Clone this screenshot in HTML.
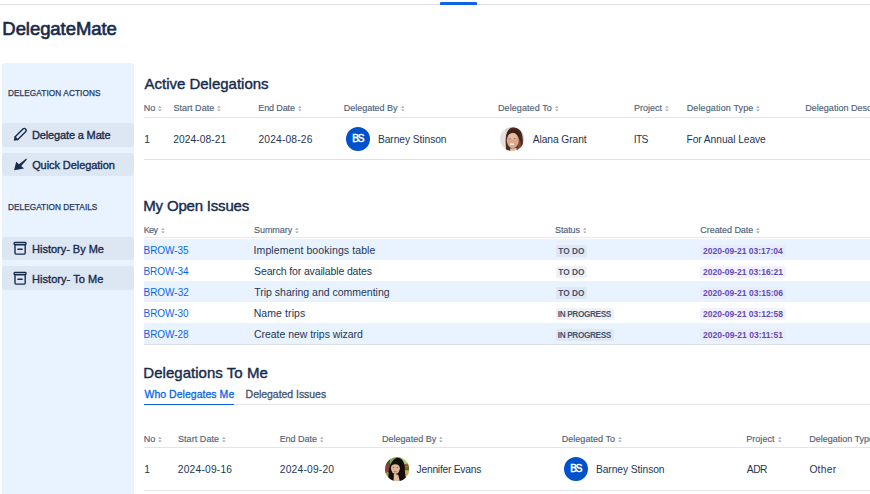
<!DOCTYPE html>
<html><head><meta charset="utf-8">
<style>
*{box-sizing:border-box;margin:0;padding:0}
html,body{width:870px;height:494px;overflow:hidden;background:#fff}
body{font-family:"Liberation Sans",sans-serif;color:#172b4d;position:relative;font-size:11px}
.abs,.t{position:absolute;white-space:nowrap}
.topline{left:0;top:3.8px;width:870px;height:1px;background:#dfe1e6}
.topbar{left:440.2px;top:2px;width:36.4px;height:2.8px;background:#0c66e4;border-radius:1.2px 1.2px 0.5px 0.5px}
.side{left:2px;top:63px;width:132px;height:440px;background:#e9f2ff;border-radius:3px}
.btn{left:2px;width:132px;height:23.5px;background:#dde6f3;border-radius:3px}
.hl{left:144px;width:726px;height:2px;background:#e3e5ea}
.av{width:24px;height:24px;border-radius:50%}
.bs{background:#0052cc;color:#fff;font-size:10px;font-weight:700;text-align:center;line-height:24px}
.row{left:143.7px;width:727px;height:21px;background:#e9f2ff}
.lz{height:12.2px;border-radius:2.5px;left:555.8px}
.dz{height:11.9px;border-radius:2.5px;left:700.3px;width:85.5px}
</style></head><body>
<div class="abs topline"></div><div class="abs topbar"></div>
<div class="abs side"></div>
<div class="abs btn" style="top:123px"></div>
<div class="abs btn" style="top:152.8px"></div>
<div class="abs btn" style="top:236.5px"></div>
<div class="abs btn" style="top:266.3px"></div>
<svg class="abs" style="left:12px;top:127px" width="16" height="16" viewBox="0 0 16 16"><g transform="translate(1.8 13.8) rotate(-45)"><path d="M0 0L3.8 -2.5V2.5Z" fill="#172b4d"/><path d="M3.5 -1.85H14.8a1.85 1.85 0 0 1 0 3.7H3.5Z" fill="none" stroke="#172b4d" stroke-width="1.4" stroke-linejoin="round"/></g></svg>
<svg class="abs" style="left:12px;top:157px" width="16" height="16" viewBox="0 0 16 16"><path d="M2.1 13.3L4.2 4.8L7 7.2L14.2 1.6L14.9 2.4L9.2 9L12 11.4Z" fill="#172b4d"/></svg>
<svg class="abs" style="left:12px;top:240px" width="16" height="16" viewBox="0 0 16 16"><g fill="none" stroke="#172b4d" stroke-width="1.4" stroke-linecap="round" stroke-linejoin="round"><rect x="2.2" y="2.5" width="11.7" height="2.2" rx=".6"/><path d="M3 5.4V13.1a1 1 0 0 0 1 1H12.2a1 1 0 0 0 1 -1V5.4M5.9 9.3h4.3"/></g></svg>
<svg class="abs" style="left:12px;top:270px" width="16" height="16" viewBox="0 0 16 16"><g fill="none" stroke="#172b4d" stroke-width="1.4" stroke-linecap="round" stroke-linejoin="round"><rect x="2.2" y="2.5" width="11.7" height="2.2" rx=".6"/><path d="M3 5.4V13.1a1 1 0 0 0 1 1H12.2a1 1 0 0 0 1 -1V5.4M5.9 9.3h4.3"/></g></svg>

<div class="abs hl" style="top:116.5px;height:1.5px"></div>
<div class="abs av bs" style="left:346.2px;top:126.65px"></div>
<svg class="abs" style="left:500.3px;top:126.7px" width="24" height="24" viewBox="0 0 24 24"><defs><clipPath id="c1"><circle cx="12" cy="12" r="12"/></clipPath><filter id="b1" x="-10%" y="-10%" width="120%" height="120%"><feGaussianBlur stdDeviation="0.7"/></filter></defs><g clip-path="url(#c1)"><g filter="url(#b1)"><rect x="-2" y="-2" width="28" height="28" fill="#d4cfca"/><rect x="-2" y="-2" width="7.5" height="28" fill="#e4e1de"/><path d="M6.5 26C5.5 18 4.8 8 8 3.5C10.5 -.2 16.5 -.8 19.5 2.5C23 6 23.3 14 22.5 20C22 23 21 25 20 26Z" fill="#4b291e"/><path d="M18.5 12C21 14 22 19 20 24L17 25Z" fill="#7d4731"/><ellipse cx="12.8" cy="13.4" rx="6" ry="7.8" fill="#dca88d"/><ellipse cx="12.4" cy="9.6" rx="4" ry="3" fill="#e8bca3"/><path d="M6.3 11C6.8 5 11 2.3 14.8 2.8C18.5 3.3 20 7 19.6 11.5C18.3 8.2 16.2 6 13.2 5.8C10 5.6 7.5 7.8 6.3 11Z" fill="#3a1e16"/><ellipse cx="10" cy="11.8" rx="1.1" ry=".45" fill="#7a5850"/><ellipse cx="14.6" cy="11.5" rx="1.1" ry=".45" fill="#7a5850"/><ellipse cx="11.9" cy="17.2" rx="2.1" ry=".9" fill="#f7eeea"/><path d="M10 21.5L10.5 26H17.5L16.5 21Z" fill="#e6bca6"/></g></g></svg>
<div class="abs hl" style="top:158.8px;height:1.5px;background:#dde0e6"></div>

<div class="abs hl" style="top:237.3px;height:1.2px;background:#e6e9ef"></div>
<div class="abs row" style="top:239px"></div>
<div class="abs row" style="top:281px"></div>
<div class="abs row" style="top:323px"></div>
<div class="abs hl" style="top:343.8px;height:1px;background:#d9dde4"></div>
<div class="abs lz" style="top:244.8px;width:30.9px;background:#dfe7f4"></div><div class="abs dz" style="top:245px;background:#e9ebff"></div>
<div class="abs lz" style="top:265.8px;width:30.9px;background:#f0f1f4"></div><div class="abs dz" style="top:266px;background:#f3f0ff"></div>
<div class="abs lz" style="top:286.8px;width:30.9px;background:#dfe7f4"></div><div class="abs dz" style="top:287px;background:#e9ebff"></div>
<div class="abs lz" style="top:307.8px;width:58.3px;background:#f0f1f4"></div><div class="abs dz" style="top:308px;background:#f3f0ff"></div>
<div class="abs lz" style="top:328.8px;width:58.3px;background:#dfe7f4"></div><div class="abs dz" style="top:329px;background:#e9ebff"></div>

<div class="abs hl" style="top:404.2px;height:1px"></div>
<div class="abs" style="left:144px;top:403.7px;width:90.1px;height:1.4px;background:#0c66e4"></div>
<div class="abs hl" style="top:446.5px;height:1.5px"></div>
<svg class="abs" style="left:384.7px;top:457.2px" width="24.3" height="24.3" viewBox="0 0 24 24"><defs><clipPath id="c2"><circle cx="12" cy="12" r="12"/></clipPath><filter id="b2" x="-10%" y="-10%" width="120%" height="120%"><feGaussianBlur stdDeviation="0.7"/></filter></defs><g clip-path="url(#c2)"><g filter="url(#b2)"><rect x="-2" y="-2" width="28" height="28" fill="#86a24a"/><rect x="-2" y="-2" width="7" height="28" fill="#5f4c3c"/><ellipse cx="1.3" cy="11.5" rx="2" ry="3.2" fill="#b43232"/><ellipse cx="2.8" cy="17.5" rx="2" ry="2.8" fill="#90a545"/><ellipse cx="19" cy="3.5" rx="5" ry="3.5" fill="#bccf80"/><ellipse cx="21" cy="8.3" rx="2.8" ry="1.2" fill="#c23a2a"/><rect x="18" y="10" width="8" height="3" fill="#55702f"/><rect x="18" y="13.5" width="8" height="4.5" fill="#d8a75c"/><rect x="18" y="18" width="8" height="8" fill="#dcc79e"/><path d="M3.6 26C3 16 3.5 4.5 11.5 .8C18 .5 20 7 19.6 13C19.6 17 21.3 21 20.6 26Z" fill="#120e0c"/><ellipse cx="10.3" cy="11" rx="4.4" ry="5.7" fill="#dfb498"/><path d="M5.3 9.2C6.3 4.5 10 3.3 13 4C15.8 4.8 15.8 8 15.2 10.2C13.7 7.6 11.6 6.8 9.6 7.2C8 7.6 6.4 8.3 5.3 9.2Z" fill="#120e0c"/><ellipse cx="8.4" cy="10.5" rx=".9" ry=".35" fill="#5a463c"/><ellipse cx="12.2" cy="10.3" rx=".9" ry=".35" fill="#5a463c"/><ellipse cx="10" cy="14.4" rx="1.4" ry=".55" fill="#c46a6a"/><path d="M8.8 16.5L8.3 26H15.2L13 17.5Z" fill="#e4bca0"/></g></g></svg>
<div class="abs av bs" style="left:564.4px;top:457.3px"></div>
<div class="abs hl" style="top:489.8px;height:1.2px"></div>
<div class="t" style="left:2.35px;top:18.89px;font-size:18.5px;line-height:20px;color:#172b4d;font-weight:400;letter-spacing:-0.062px;-webkit-text-stroke:0.65px #172b4d;">DelegateMate</div>
<div class="t" style="left:7.96px;top:84.14px;font-size:8.25px;line-height:20px;color:#27395a;font-weight:400;letter-spacing:0.088px;-webkit-text-stroke:0.25px #27395a;">DELEGATION ACTIONS</div>
<div class="t" style="left:7.96px;top:197.94px;font-size:8.25px;line-height:20px;color:#27395a;font-weight:400;letter-spacing:0.046px;-webkit-text-stroke:0.25px #27395a;">DELEGATION DETAILS</div>
<div class="t" style="left:32.09px;top:125.29px;font-size:11.0px;line-height:20px;color:#172b4d;font-weight:400;letter-spacing:-0.156px;-webkit-text-stroke:0.35px #172b4d;">Delegate a Mate</div>
<div class="t" style="left:32.13px;top:155.09px;font-size:11.0px;line-height:20px;color:#172b4d;font-weight:400;letter-spacing:-0.071px;-webkit-text-stroke:0.35px #172b4d;">Quick Delegation</div>
<div class="t" style="left:32.09px;top:239.09px;font-size:11.0px;line-height:20px;color:#172b4d;font-weight:400;letter-spacing:-0.022px;-webkit-text-stroke:0.35px #172b4d;">History- By Me</div>
<div class="t" style="left:32.09px;top:268.89px;font-size:11.0px;line-height:20px;color:#172b4d;font-weight:400;letter-spacing:0.041px;-webkit-text-stroke:0.35px #172b4d;">History- To Me</div>
<div class="t" style="left:144.50px;top:74.10px;font-size:15.0px;line-height:20px;color:#172b4d;font-weight:400;letter-spacing:-0.011px;-webkit-text-stroke:0.4px #172b4d;">Active Delegations</div>
<div class="t" style="left:143.30px;top:195.50px;font-size:15.0px;line-height:20px;color:#172b4d;font-weight:400;letter-spacing:-0.187px;-webkit-text-stroke:0.4px #172b4d;">My Open Issues</div>
<div class="t" style="left:143.30px;top:363.10px;font-size:15.0px;line-height:20px;color:#172b4d;font-weight:400;letter-spacing:0.032px;-webkit-text-stroke:0.4px #172b4d;">Delegations To Me</div>
<div class="t" style="left:143.66px;top:97.88px;font-size:9.0px;line-height:20px;color:#505f79;font-weight:400;letter-spacing:0.090px;-webkit-text-stroke:0.15px #505f79;">No</div>
<div class="t" style="left:173.41px;top:97.88px;font-size:9.0px;line-height:20px;color:#505f79;font-weight:400;letter-spacing:0.035px;-webkit-text-stroke:0.15px #505f79;">Start Date</div>
<div class="t" style="left:258.35px;top:97.88px;font-size:9.0px;line-height:20px;color:#505f79;font-weight:400;letter-spacing:-0.133px;-webkit-text-stroke:0.15px #505f79;">End Date</div>
<div class="t" style="left:343.65px;top:97.88px;font-size:9.0px;line-height:20px;color:#505f79;font-weight:400;letter-spacing:-0.006px;-webkit-text-stroke:0.15px #505f79;">Delegated By</div>
<div class="t" style="left:498.05px;top:97.88px;font-size:9.0px;line-height:20px;color:#505f79;font-weight:400;letter-spacing:0.078px;-webkit-text-stroke:0.15px #505f79;">Delegated To</div>
<div class="t" style="left:634.06px;top:97.88px;font-size:9.0px;line-height:20px;color:#505f79;font-weight:400;letter-spacing:-0.027px;-webkit-text-stroke:0.15px #505f79;">Project</div>
<div class="t" style="left:686.65px;top:97.88px;font-size:9.0px;line-height:20px;color:#505f79;font-weight:400;letter-spacing:0.132px;-webkit-text-stroke:0.15px #505f79;">Delegation Type</div>
<div class="t" style="left:805.36px;top:97.88px;font-size:9.0px;line-height:20px;color:#505f79;font-weight:400;-webkit-text-stroke:0.15px #505f79;">Delegation Description</div>
<div class="t" style="left:143.66px;top:219.58px;font-size:9.0px;line-height:20px;color:#505f79;font-weight:400;letter-spacing:-0.569px;-webkit-text-stroke:0.15px #505f79;">Key</div>
<div class="t" style="left:254.01px;top:219.58px;font-size:9.0px;line-height:20px;color:#505f79;font-weight:400;letter-spacing:-0.049px;-webkit-text-stroke:0.15px #505f79;">Summary</div>
<div class="t" style="left:555.01px;top:219.58px;font-size:9.0px;line-height:20px;color:#505f79;font-weight:400;letter-spacing:-0.127px;-webkit-text-stroke:0.15px #505f79;">Status</div>
<div class="t" style="left:700.33px;top:219.58px;font-size:9.0px;line-height:20px;color:#505f79;font-weight:400;letter-spacing:-0.055px;-webkit-text-stroke:0.15px #505f79;">Created Date</div>
<div class="t" style="left:143.66px;top:428.88px;font-size:9.0px;line-height:20px;color:#505f79;font-weight:400;letter-spacing:0.090px;-webkit-text-stroke:0.15px #505f79;">No</div>
<div class="t" style="left:178.01px;top:428.88px;font-size:9.0px;line-height:20px;color:#505f79;font-weight:400;letter-spacing:0.058px;-webkit-text-stroke:0.15px #505f79;">Start Date</div>
<div class="t" style="left:279.65px;top:428.88px;font-size:9.0px;line-height:20px;color:#505f79;font-weight:400;letter-spacing:-0.033px;-webkit-text-stroke:0.15px #505f79;">End Date</div>
<div class="t" style="left:382.05px;top:428.88px;font-size:9.0px;line-height:20px;color:#505f79;font-weight:400;letter-spacing:0.012px;-webkit-text-stroke:0.15px #505f79;">Delegated By</div>
<div class="t" style="left:561.65px;top:428.88px;font-size:9.0px;line-height:20px;color:#505f79;font-weight:400;letter-spacing:0.051px;-webkit-text-stroke:0.15px #505f79;">Delegated To</div>
<div class="t" style="left:746.15px;top:428.88px;font-size:9.0px;line-height:20px;color:#505f79;font-weight:400;letter-spacing:0.073px;-webkit-text-stroke:0.15px #505f79;">Project</div>
<div class="t" style="left:809.15px;top:428.88px;font-size:9.0px;line-height:20px;color:#505f79;font-weight:400;-webkit-text-stroke:0.15px #505f79;">Delegation Type</div>
<div class="t" style="left:144.28px;top:129.75px;font-size:10.25px;line-height:20px;color:#233656;font-weight:400;">1</div>
<div class="t" style="left:173.19px;top:129.75px;font-size:10.25px;line-height:20px;color:#233656;font-weight:400;letter-spacing:0.062px;">2024-08-21</div>
<div class="t" style="left:258.49px;top:129.75px;font-size:10.25px;line-height:20px;color:#233656;font-weight:400;letter-spacing:0.161px;">2024-08-26</div>
<div class="t" style="left:377.88px;top:129.75px;font-size:10.25px;line-height:20px;color:#233656;font-weight:400;letter-spacing:-0.063px;">Barney Stinson</div>
<div class="t" style="left:532.70px;top:129.75px;font-size:10.25px;line-height:20px;color:#233656;font-weight:400;letter-spacing:-0.072px;">Alana Grant</div>
<div class="t" style="left:633.78px;top:129.75px;font-size:10.25px;line-height:20px;color:#233656;font-weight:400;letter-spacing:-0.672px;">ITS</div>
<div class="t" style="left:686.48px;top:129.75px;font-size:10.25px;line-height:20px;color:#233656;font-weight:400;letter-spacing:-0.068px;">For Annual Leave</div>
<div class="t" style="left:144.28px;top:459.85px;font-size:10.25px;line-height:20px;color:#233656;font-weight:400;">1</div>
<div class="t" style="left:177.79px;top:459.85px;font-size:10.25px;line-height:20px;color:#233656;font-weight:400;letter-spacing:0.206px;">2024-09-16</div>
<div class="t" style="left:279.79px;top:459.85px;font-size:10.25px;line-height:20px;color:#233656;font-weight:400;letter-spacing:0.206px;">2024-09-20</div>
<div class="t" style="left:416.60px;top:459.85px;font-size:10.25px;line-height:20px;color:#233656;font-weight:400;letter-spacing:-0.238px;">Jennifer Evans</div>
<div class="t" style="left:595.88px;top:459.85px;font-size:10.25px;line-height:20px;color:#233656;font-weight:400;letter-spacing:-0.063px;">Barney Stinson</div>
<div class="t" style="left:746.80px;top:459.85px;font-size:10.25px;line-height:20px;color:#233656;font-weight:400;letter-spacing:-0.504px;">ADR</div>
<div class="t" style="left:809.39px;top:459.85px;font-size:10.25px;line-height:20px;color:#233656;font-weight:400;letter-spacing:0.277px;">Other</div>
<div class="t" style="left:143.50px;top:241.03px;font-size:10.0px;line-height:20px;color:#0c66e4;font-weight:400;letter-spacing:-0.037px;">BROW-35</div>
<div class="t" style="left:143.50px;top:262.04px;font-size:10.0px;line-height:20px;color:#0c66e4;font-weight:400;letter-spacing:-0.053px;">BROW-34</div>
<div class="t" style="left:143.50px;top:283.04px;font-size:10.0px;line-height:20px;color:#0c66e4;font-weight:400;letter-spacing:-0.020px;">BROW-32</div>
<div class="t" style="left:143.50px;top:304.04px;font-size:10.0px;line-height:20px;color:#0c66e4;font-weight:400;letter-spacing:-0.037px;">BROW-30</div>
<div class="t" style="left:143.50px;top:325.04px;font-size:10.0px;line-height:20px;color:#0c66e4;font-weight:400;letter-spacing:-0.037px;">BROW-28</div>
<div class="t" style="left:253.56px;top:240.06px;font-size:10.5px;line-height:20px;color:#233656;font-weight:400;letter-spacing:0.094px;">Implement bookings table</div>
<div class="t" style="left:254.08px;top:261.06px;font-size:10.5px;line-height:20px;color:#233656;font-weight:400;letter-spacing:-0.139px;">Search for available dates</div>
<div class="t" style="left:254.29px;top:282.06px;font-size:10.5px;line-height:20px;color:#233656;font-weight:400;letter-spacing:-0.011px;">Trip sharing and commenting</div>
<div class="t" style="left:253.66px;top:303.06px;font-size:10.5px;line-height:20px;color:#233656;font-weight:400;letter-spacing:0.099px;">Name trips</div>
<div class="t" style="left:253.97px;top:324.06px;font-size:10.5px;line-height:20px;color:#233656;font-weight:400;letter-spacing:-0.036px;">Create new trips wizard</div>
<div class="t" style="left:558.22px;top:242.24px;font-size:8.25px;line-height:20px;color:#44546f;font-weight:700;letter-spacing:0.030px;">TO DO</div>
<div class="t" style="left:558.22px;top:263.24px;font-size:8.25px;line-height:20px;color:#44546f;font-weight:700;letter-spacing:0.030px;">TO DO</div>
<div class="t" style="left:558.22px;top:284.24px;font-size:8.25px;line-height:20px;color:#44546f;font-weight:700;letter-spacing:0.030px;">TO DO</div>
<div class="t" style="left:557.80px;top:305.24px;font-size:8.25px;line-height:20px;color:#44546f;font-weight:700;letter-spacing:-0.380px;">IN PROGRESS</div>
<div class="t" style="left:557.80px;top:326.24px;font-size:8.25px;line-height:20px;color:#44546f;font-weight:700;letter-spacing:-0.380px;">IN PROGRESS</div>
<div class="t" style="left:703.04px;top:241.45px;font-size:8.5px;line-height:20px;color:#5e4db2;font-weight:700;letter-spacing:-0.014px;">2020-09-21 03:17:04</div>
<div class="t" style="left:703.04px;top:262.45px;font-size:8.5px;line-height:20px;color:#5e4db2;font-weight:700;">2020-09-21 03:16:21</div>
<div class="t" style="left:703.04px;top:283.45px;font-size:8.5px;line-height:20px;color:#5e4db2;font-weight:700;letter-spacing:0.005px;">2020-09-21 03:15:06</div>
<div class="t" style="left:703.04px;top:304.45px;font-size:8.5px;line-height:20px;color:#5e4db2;font-weight:700;">2020-09-21 03:12:58</div>
<div class="t" style="left:703.04px;top:325.45px;font-size:8.5px;line-height:20px;color:#5e4db2;font-weight:700;letter-spacing:0.027px;">2020-09-21 03:11:51</div>
<div class="t" style="left:352.15px;top:128.73px;font-size:10px;line-height:20px;color:#ffffff;font-weight:400;letter-spacing:-1.170px;-webkit-text-stroke:0.5px #ffffff;">BS</div>
<div class="t" style="left:570.25px;top:459.34px;font-size:10px;line-height:20px;color:#ffffff;font-weight:400;letter-spacing:-1.170px;-webkit-text-stroke:0.5px #ffffff;">BS</div>
<div class="t" style="left:144.45px;top:383.76px;font-size:10.5px;line-height:20px;color:#0c66e4;font-weight:400;letter-spacing:0.033px;-webkit-text-stroke:0.3px #0c66e4;">Who Delegates Me</div>
<div class="t" style="left:245.61px;top:383.76px;font-size:10.5px;line-height:20px;color:#44546f;font-weight:400;letter-spacing:-0.039px;-webkit-text-stroke:0.3px #44546f;">Delegated Issues</div>
<svg class="abs" style="left:158.0px;top:106.0px" width="3.8" height="5.2" viewBox="0 0 3.8 5.2"><path d="M0 1.7L1.9 0L3.8 1.7ZM0 3.5L1.9 5.2L3.8 3.5Z" fill="#97a0af"/></svg>
<svg class="abs" style="left:217.0px;top:106.0px" width="3.8" height="5.2" viewBox="0 0 3.8 5.2"><path d="M0 1.7L1.9 0L3.8 1.7ZM0 3.5L1.9 5.2L3.8 3.5Z" fill="#97a0af"/></svg>
<svg class="abs" style="left:297.7px;top:106.0px" width="3.8" height="5.2" viewBox="0 0 3.8 5.2"><path d="M0 1.7L1.9 0L3.8 1.7ZM0 3.5L1.9 5.2L3.8 3.5Z" fill="#97a0af"/></svg>
<svg class="abs" style="left:400.7px;top:106.0px" width="3.8" height="5.2" viewBox="0 0 3.8 5.2"><path d="M0 1.7L1.9 0L3.8 1.7ZM0 3.5L1.9 5.2L3.8 3.5Z" fill="#97a0af"/></svg>
<svg class="abs" style="left:554.7px;top:106.0px" width="3.8" height="5.2" viewBox="0 0 3.8 5.2"><path d="M0 1.7L1.9 0L3.8 1.7ZM0 3.5L1.9 5.2L3.8 3.5Z" fill="#97a0af"/></svg>
<svg class="abs" style="left:665.0px;top:106.0px" width="3.8" height="5.2" viewBox="0 0 3.8 5.2"><path d="M0 1.7L1.9 0L3.8 1.7ZM0 3.5L1.9 5.2L3.8 3.5Z" fill="#97a0af"/></svg>
<svg class="abs" style="left:756.3px;top:106.0px" width="3.8" height="5.2" viewBox="0 0 3.8 5.2"><path d="M0 1.7L1.9 0L3.8 1.7ZM0 3.5L1.9 5.2L3.8 3.5Z" fill="#97a0af"/></svg>
<svg class="abs" style="left:161.1px;top:227.7px" width="3.8" height="5.2" viewBox="0 0 3.8 5.2"><path d="M0 1.7L1.9 0L3.8 1.7ZM0 3.5L1.9 5.2L3.8 3.5Z" fill="#97a0af"/></svg>
<svg class="abs" style="left:295.3px;top:227.7px" width="3.8" height="5.2" viewBox="0 0 3.8 5.2"><path d="M0 1.7L1.9 0L3.8 1.7ZM0 3.5L1.9 5.2L3.8 3.5Z" fill="#97a0af"/></svg>
<svg class="abs" style="left:582.7px;top:227.7px" width="3.8" height="5.2" viewBox="0 0 3.8 5.2"><path d="M0 1.7L1.9 0L3.8 1.7ZM0 3.5L1.9 5.2L3.8 3.5Z" fill="#97a0af"/></svg>
<svg class="abs" style="left:756.0px;top:227.7px" width="3.8" height="5.2" viewBox="0 0 3.8 5.2"><path d="M0 1.7L1.9 0L3.8 1.7ZM0 3.5L1.9 5.2L3.8 3.5Z" fill="#97a0af"/></svg>
<svg class="abs" style="left:158.0px;top:437.0px" width="3.8" height="5.2" viewBox="0 0 3.8 5.2"><path d="M0 1.7L1.9 0L3.8 1.7ZM0 3.5L1.9 5.2L3.8 3.5Z" fill="#97a0af"/></svg>
<svg class="abs" style="left:221.8px;top:437.0px" width="3.8" height="5.2" viewBox="0 0 3.8 5.2"><path d="M0 1.7L1.9 0L3.8 1.7ZM0 3.5L1.9 5.2L3.8 3.5Z" fill="#97a0af"/></svg>
<svg class="abs" style="left:319.7px;top:437.0px" width="3.8" height="5.2" viewBox="0 0 3.8 5.2"><path d="M0 1.7L1.9 0L3.8 1.7ZM0 3.5L1.9 5.2L3.8 3.5Z" fill="#97a0af"/></svg>
<svg class="abs" style="left:439.3px;top:437.0px" width="3.8" height="5.2" viewBox="0 0 3.8 5.2"><path d="M0 1.7L1.9 0L3.8 1.7ZM0 3.5L1.9 5.2L3.8 3.5Z" fill="#97a0af"/></svg>
<svg class="abs" style="left:618.0px;top:437.0px" width="3.8" height="5.2" viewBox="0 0 3.8 5.2"><path d="M0 1.7L1.9 0L3.8 1.7ZM0 3.5L1.9 5.2L3.8 3.5Z" fill="#97a0af"/></svg>
<svg class="abs" style="left:777.7px;top:437.0px" width="3.8" height="5.2" viewBox="0 0 3.8 5.2"><path d="M0 1.7L1.9 0L3.8 1.7ZM0 3.5L1.9 5.2L3.8 3.5Z" fill="#97a0af"/></svg>
</body></html>
